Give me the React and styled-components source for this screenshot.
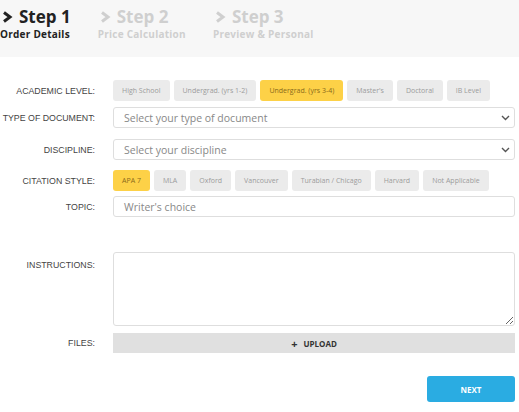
import React from 'react'
import styled, { createGlobalStyle } from 'styled-components'

const Global = createGlobalStyle`
  body {
    margin: 0;
    background: #fff;
    font-family: "Open Sans", "Liberation Sans", sans-serif;
  }
`

const academic = ['High School', 'Undergrad. (yrs 1-2)', 'Undergrad. (yrs 3-4)', "Master's", 'Doctoral', 'IB Level']
const citation = ['APA 7', 'MLA', 'Oxford', 'Vancouver', 'Turabian / Chicago', 'Harvard', 'Not Applicable']

const steps = [
  { title: 'Step 1', sub: 'Order Details', active: true },
  { title: 'Step 2', sub: 'Price Calculation' },
  { title: 'Step 3', sub: 'Preview & Personal' },
]

function Chevron({ color }) {
  return (
    <svg width="11" height="12" viewBox="0 0 11 12">
      <polyline points="2,1.5 8,6 2,10.5" fill="none" stroke={color} strokeWidth="3" strokeLinejoin="miter" />
    </svg>
  )
}

function SelectArrow() {
  return (
    <svg width="9" height="6" viewBox="0 0 9 6">
      <polyline points="1,1 4.5,4.5 8,1" fill="none" stroke="#555" strokeWidth="1.4" />
    </svg>
  )
}

export default function App() {
  return (
    <Page>
      <Global />
      <Header>
        {steps.map((s) => (
          <Step key={s.title} $active={s.active}>
            <StepTitle>
              <Chevron color={s.active ? '#222' : '#cfcfcf'} />
              {s.title}
            </StepTitle>
            <StepSub>{s.sub}</StepSub>
          </Step>
        ))}
      </Header>
      <Form>
        <Label $top={23}>ACADEMIC LEVEL:</Label>
        <Options $top={23}>
          {academic.map((a) => (
            <Option key={a} $selected={a === 'Undergrad. (yrs 3-4)'}>{a}</Option>
          ))}
        </Options>

        <Label $top={6}>TYPE OF DOCUMENT:</Label>
        <Field $top={6}>
          <span>Select your type of document</span>
          <SelectArrow />
        </Field>

        <Label $top={11}>DISCIPLINE:</Label>
        <Field $top={11}>
          <span>Select your discipline</span>
          <SelectArrow />
        </Field>

        <Label $top={10}>CITATION STYLE:</Label>
        <Options $top={10}>
          {citation.map((c) => (
            <Option key={c} $selected={c === 'APA 7'}>{c}</Option>
          ))}
        </Options>

        <Label $top={5}>TOPIC:</Label>
        <Field $top={5}>
          <span>Writer's choice</span>
        </Field>

        <Label $top={35} $align="start" $pad={8}>INSTRUCTIONS:</Label>
        <TextArea $top={35} />

        <Label $top={7}>FILES:</Label>
        <Upload $top={7}>
          <span>+</span> UPLOAD
        </Upload>

        <Actions>
          <NextButton>NEXT</NextButton>
        </Actions>
      </Form>
    </Page>
  )
}

const Page = styled.div`
  width: 519px;
  height: 412px;
  overflow: hidden;
`

const Header = styled.div`
  height: 57px;
  box-sizing: border-box;
  padding: 7px 0 0 0;
  background: #f7f7f7;
  display: flex;
  gap: 27px;
`

const Step = styled.div`
  display: flex;
  flex-direction: column;
  color: ${(p) => (p.$active ? '#222' : '#cfcfcf')};
`

const StepTitle = styled.div`
  display: flex;
  align-items: center;
  gap: 6px;
  padding-left: 2px;
  font-size: 17px;
  font-weight: 700;
  line-height: 20px;
`

const StepSub = styled.div`
  font-size: 10px;
  font-weight: 700;
  line-height: 13px;
  margin-top: 1px;
  letter-spacing: 0.25px;
`

const Form = styled.div`
  display: grid;
  grid-template-columns: 95px 1fr;
  column-gap: 18px;
  padding-right: 4px;
`

const Label = styled.div`
  margin-top: ${(p) => p.$top}px;
  align-self: ${(p) => p.$align || 'center'};
  padding-top: ${(p) => p.$pad || 0}px;
  text-align: right;
  font-family: "Liberation Sans", Arial, sans-serif;
  font-size: 8.8px;
  color: #444;
  white-space: nowrap;
`

const Options = styled.div`
  margin-top: ${(p) => p.$top}px;
  display: flex;
  flex-wrap: wrap;
  gap: 4px;
`

const Option = styled.div`
  height: 21px;
  padding: 0 9px;
  display: flex;
  align-items: center;
  border-radius: 3px;
  font-size: 7px;
  background: ${(p) => (p.$selected ? '#fdd147' : '#ebebeb')};
  color: ${(p) => (p.$selected ? '#8a6a1a' : '#9b9b9b')};
  white-space: nowrap;
`

const Field = styled.div`
  margin-top: ${(p) => p.$top}px;
  height: 21px;
  box-sizing: border-box;
  border: 1px solid #dedede;
  border-radius: 3px;
  padding: 0 4px 0 10px;
  display: flex;
  align-items: center;
  justify-content: space-between;
  font-size: 10.5px;
  color: #888;
`

const TextArea = styled.textarea`
  margin: ${(p) => p.$top}px 0 0 0;
  height: 74px;
  box-sizing: border-box;
  border: 1px solid #dedede;
  border-radius: 3px;
  resize: vertical;
  font-family: inherit;
`

const Upload = styled.div`
  margin-top: ${(p) => p.$top}px;
  height: 20px;
  background: #e0e0e0;
  display: flex;
  align-items: center;
  justify-content: center;
  gap: 6px;
  font-size: 8px;
  font-weight: 700;
  color: #333;
  span {
    font-size: 11px;
  }
`

const Actions = styled.div`
  grid-column: 1 / -1;
  display: flex;
  justify-content: flex-end;
  margin-top: 23px;
`

const NextButton = styled.button`
  width: 88px;
  height: 26px;
  border: none;
  border-radius: 3px;
  background: #2aace2;
  color: #fff;
  font-family: inherit;
  font-size: 8px;
  font-weight: 700;
`
